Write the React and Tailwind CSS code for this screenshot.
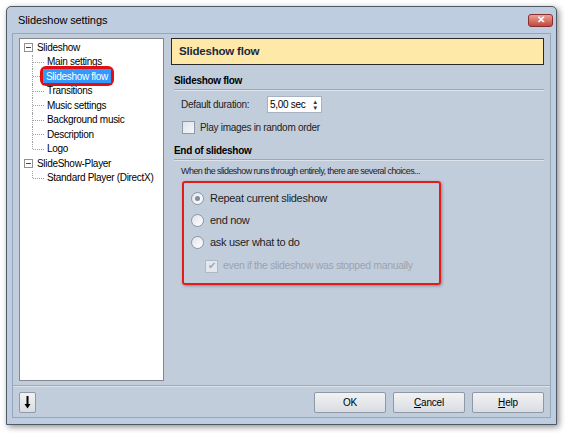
import { useState } from 'react';

const font = { fontFamily: '"Liberation Sans", Tahoma, Arial, sans-serif' };

function Expander() {
  return (
    <span className="w-[9px] h-[9px] border border-[#919191] bg-white flex items-center justify-center shrink-0">
      <span className="w-[5px] h-px bg-[#2c4c7c]" />
    </span>
  );
}

function TreeChild({ label, selected, last }) {
  return (
    <div className="relative h-[14.5px] flex items-center pl-[23px] whitespace-nowrap">
      <span className={`absolute left-[8px] top-0 border-l border-dotted border-[#a0a0a0] ${last ? 'h-[7px]' : 'h-full'}`} />
      <span className="absolute left-[9px] top-[7px] w-[11px] border-t border-dotted border-[#a0a0a0]" />
      {selected ? (
        <span className="relative ml-[-4px] rounded-[3px] ring-2 ring-[#e01010] ring-offset-1 ring-offset-[#e01010]">
          <span className="bg-[#3399ff] text-white px-[3px] h-[14px] flex items-center">{label}</span>
        </span>
      ) : (
        <span className="text-black">{label}</span>
      )}
    </div>
  );
}

function TreeRoot({ label }) {
  return (
    <div className="h-[14.5px] flex items-center gap-[4px] pl-[4px] whitespace-nowrap">
      <Expander />
      <span>{label}</span>
    </div>
  );
}

function Radio({ checked, label }) {
  return (
    <div className="flex items-center gap-[6px] h-[22px]">
      <span className="w-[13px] h-[13px] rounded-full border border-[#8a95a6] bg-gradient-to-br from-[#dfe4ea] to-white flex items-center justify-center">
        {checked && <span className="w-[5px] h-[5px] rounded-full bg-[#7f8da3]" />}
      </span>
      <span className="text-[11px] tracking-[-0.3px] text-[#1e1e1e] whitespace-nowrap">{label}</span>
    </div>
  );
}

function Button({ children }) {
  return (
    <button className="w-[72px] h-[21px] border border-[#8e98a7] rounded-[2px] bg-gradient-to-b from-[#f2f2f2] to-[#d9dde3] text-[10px] tracking-[-0.2px] text-black">
      {children}
    </button>
  );
}

export default function App() {
  const [sel] = useState('Slideshow flow');
  return (
    <div className="w-[565px] h-[433px] bg-white pl-[6px] pt-[6px] overflow-hidden text-[10px] tracking-[-0.3px]" style={font}>
      <div className="w-[551px] h-[419px] border border-[#4f5966] rounded-t-[5px] bg-[#bfcde0] shadow-[2px_2px_6px_rgba(0,0,0,0.45)] flex flex-col">
        <div className="h-[26px] flex items-center justify-between pl-[11px] pr-[3px]">
          <span className="text-[11px] tracking-[-0.1px] text-black">Slideshow settings</span>
          <span className="w-[25px] h-[13px] rounded-[3px] border border-[#8a2d2d] bg-gradient-to-b from-[#e9a295] to-[#c2473c] flex items-center justify-center text-white text-[10px] font-bold leading-none">
            ✕
          </span>
        </div>
        <div className="mx-[5px] border border-[#97a6bc] bg-[#c2cddc] flex flex-col h-[385px]">
          <div className="flex gap-[7px] px-[6px] pt-[4px] h-[347px]">
            <div className="w-[145px] h-[343px] bg-white border border-[#828790] pt-[1px]">
              <TreeRoot label="Slideshow" />
              <div className="pl-[4px]">
                {['Main settings', 'Slideshow flow', 'Transitions', 'Music settings', 'Background music', 'Description', 'Logo'].map((t, i, a) => (
                  <TreeChild key={t} label={t} selected={t === sel} last={i === a.length - 1} />
                ))}
              </div>
              <TreeRoot label="SlideShow-Player" />
              <div className="pl-[4px]">
                <TreeChild label="Standard Player (DirectX)" last />
              </div>
            </div>
            <div className="flex-1 flex flex-col">
              <div className="h-[27px] shrink-0 bg-[#fee9a8] border border-[#2a2a2a] flex items-center pl-[7px] text-[11.5px] tracking-[-0.2px] font-bold text-[#1a2a40]">
                Slideshow flow
              </div>
              <div className="mt-[9px] h-[14px] leading-[14px] pl-[3px] font-bold text-black">Slideshow flow</div>
              <div className="mt-[1px] ml-[3px] h-[2px] border-t border-[#9aa8ba] border-b border-b-[#dde3ec]" />
              <div className="mt-[5px] pl-[10px] flex items-center h-[17px]">
                <span className="w-[86px] text-[#222]">Default duration:</span>
                <span className="w-[55px] h-[17px] bg-white border border-[#a7b2c2] flex items-center justify-between pl-[2px] pr-[3px] text-black">
                  5,00 sec
                  <span className="flex flex-col items-center leading-none text-[6px] text-[#333]">
                    <span>▲</span>
                    <span>▼</span>
                  </span>
                </span>
              </div>
              <div className="mt-[7px] pl-[11px] flex items-center gap-[5px] h-[14px]">
                <span className="w-[13px] h-[13px] border border-[#8e98a7] bg-gradient-to-br from-[#dfe3e8] to-[#f7f7f7]" />
                <span className="text-[#222]">Play images in random order</span>
              </div>
              <div className="mt-[10px] h-[14px] leading-[14px] pl-[3px] font-bold text-black">End of slideshow</div>
              <div className="mt-[1px] ml-[3px] h-[2px] border-t border-[#9aa8ba] border-b border-b-[#dde3ec]" />
              <div className="mt-[4px] h-[12px] leading-[12px] pl-[10px] text-[9px] tracking-[-0.55px] text-[#222] whitespace-nowrap">
                When the slideshow runs through entirely, there are several choices...
              </div>
              <div className="mt-[4px] ml-[11px] w-[259px] h-[104px] border-2 border-[#e31b1b] rounded-[3px] shadow-[1px_1px_3px_rgba(0,0,0,0.35)] pl-[7px] pt-[4px]">
                <Radio checked label="Repeat current slideshow" />
                <Radio label="end now" />
                <Radio label="ask user what to do" />
                <div className="mt-[2px] flex items-center gap-[5px] pl-[14px] h-[22px] text-[#9aa3b0] text-[10.5px] tracking-[-0.35px] whitespace-nowrap">
                  <span className="w-[13px] h-[13px] border border-[#b0b8c4] bg-[#e4e8ee] flex items-center justify-center text-[10px] text-[#a0a8b4] leading-none">
                    ✔
                  </span>
                  even if the slideshow was stopped manually
                </div>
              </div>
            </div>
          </div>
          <div className="mt-[4px] border-t border-[#9eabbd] border-b border-b-[#dbe2ec] h-[2px]" />
          <div className="flex items-center px-[6px] pt-[5px]">
            <button className="w-[17px] h-[21px] border border-[#8e98a7] rounded-[2px] bg-gradient-to-b from-[#f2f2f2] to-[#d9dde3] flex items-center justify-center">
              <svg width="7" height="13" viewBox="0 0 7 13">
                <path d="M3.5 0v10" stroke="#000" strokeWidth="2" />
                <path d="M0.5 8L3.5 12.5L6.5 8Z" fill="#000" />
              </svg>
            </button>
            <div className="ml-auto flex gap-[7px]">
              <Button>OK</Button>
              <Button>
                <span className="underline">C</span>ancel
              </Button>
              <Button>
                <span className="underline">H</span>elp
              </Button>
            </div>
          </div>
        </div>
      </div>
    </div>
  );
}
